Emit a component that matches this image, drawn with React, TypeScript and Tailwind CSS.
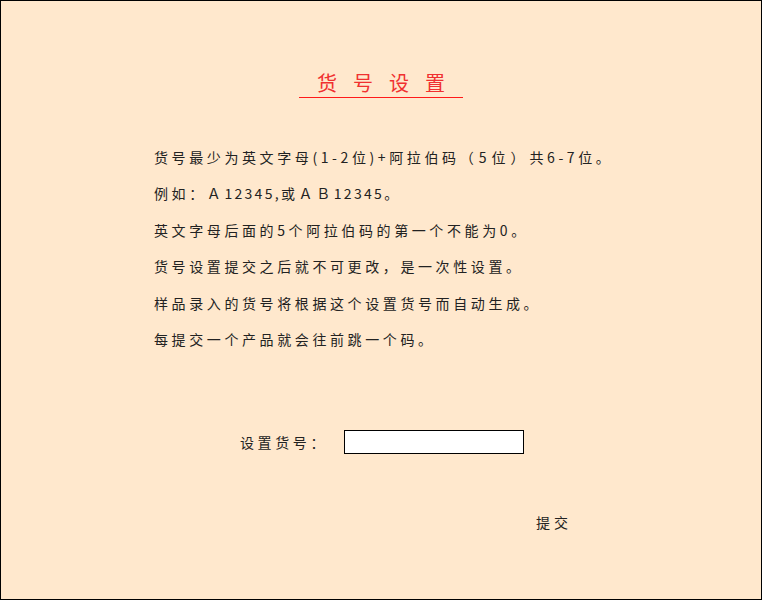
import React, { useState } from 'react';

const font = "font-['Noto_Sans_CJK_SC','Noto_Sans',sans-serif]";

const rules: React.ReactNode[] = [
    <>
        货号最少为英文字母(1-2位)+阿拉伯码<span className="tracking-[5px]">（5位）</span>共6-7位。
    </>,
    <>
        例如：Ａ<span className="tracking-[2.3px]">12345,</span>或ＡＢ<span className="tracking-[2.3px]">12345</span>。
    </>,
    '英文字母后面的5个阿拉伯码的第一个不能为0。',
    '货号设置提交之后就不可更改，是一次性设置。',
    '样品录入的货号将根据这个设置货号而自动生成。',
    '每提交一个产品就会往前跳一个码。',
];

const App = () => {
    const [code, setCode] = useState('');

    return (
        <div className={`w-[762px] h-[600px] border border-black bg-[#ffe8cd] text-[#222] text-[14px] ${font}`}>
            {/* Title */}
            <div className="mt-[68px] mx-auto w-[164px] border-b border-[#ff1a1a] text-center">
                <h1 className="pl-[16px] text-[20px] leading-[28px] tracking-[16px] text-[#f03030] font-normal">
                    货号设置
                </h1>
            </div>

            {/* Rules */}
            <div className="mt-[41px] ml-[153px] tracking-[3.6px]">
                {rules.map((r, i) => (
                    <p key={i} className="leading-[36.4px] whitespace-nowrap">
                        {r}
                    </p>
                ))}
            </div>

            {/* Form */}
            <div className="mt-[73px] ml-[239px] flex items-center">
                <label className="tracking-[3.6px] leading-[20px]">设置货号：</label>
                <input
                    value={code}
                    onChange={(e) => setCode(e.target.value)}
                    className="ml-[16px] w-[180px] h-[24px] border border-black bg-white px-1 outline-none"
                />
            </div>

            <div className="mt-[58px] ml-[535px]">
                <button className="tracking-[4px] leading-[20px] bg-transparent">提交</button>
            </div>
        </div>
    );
};

export default App;
